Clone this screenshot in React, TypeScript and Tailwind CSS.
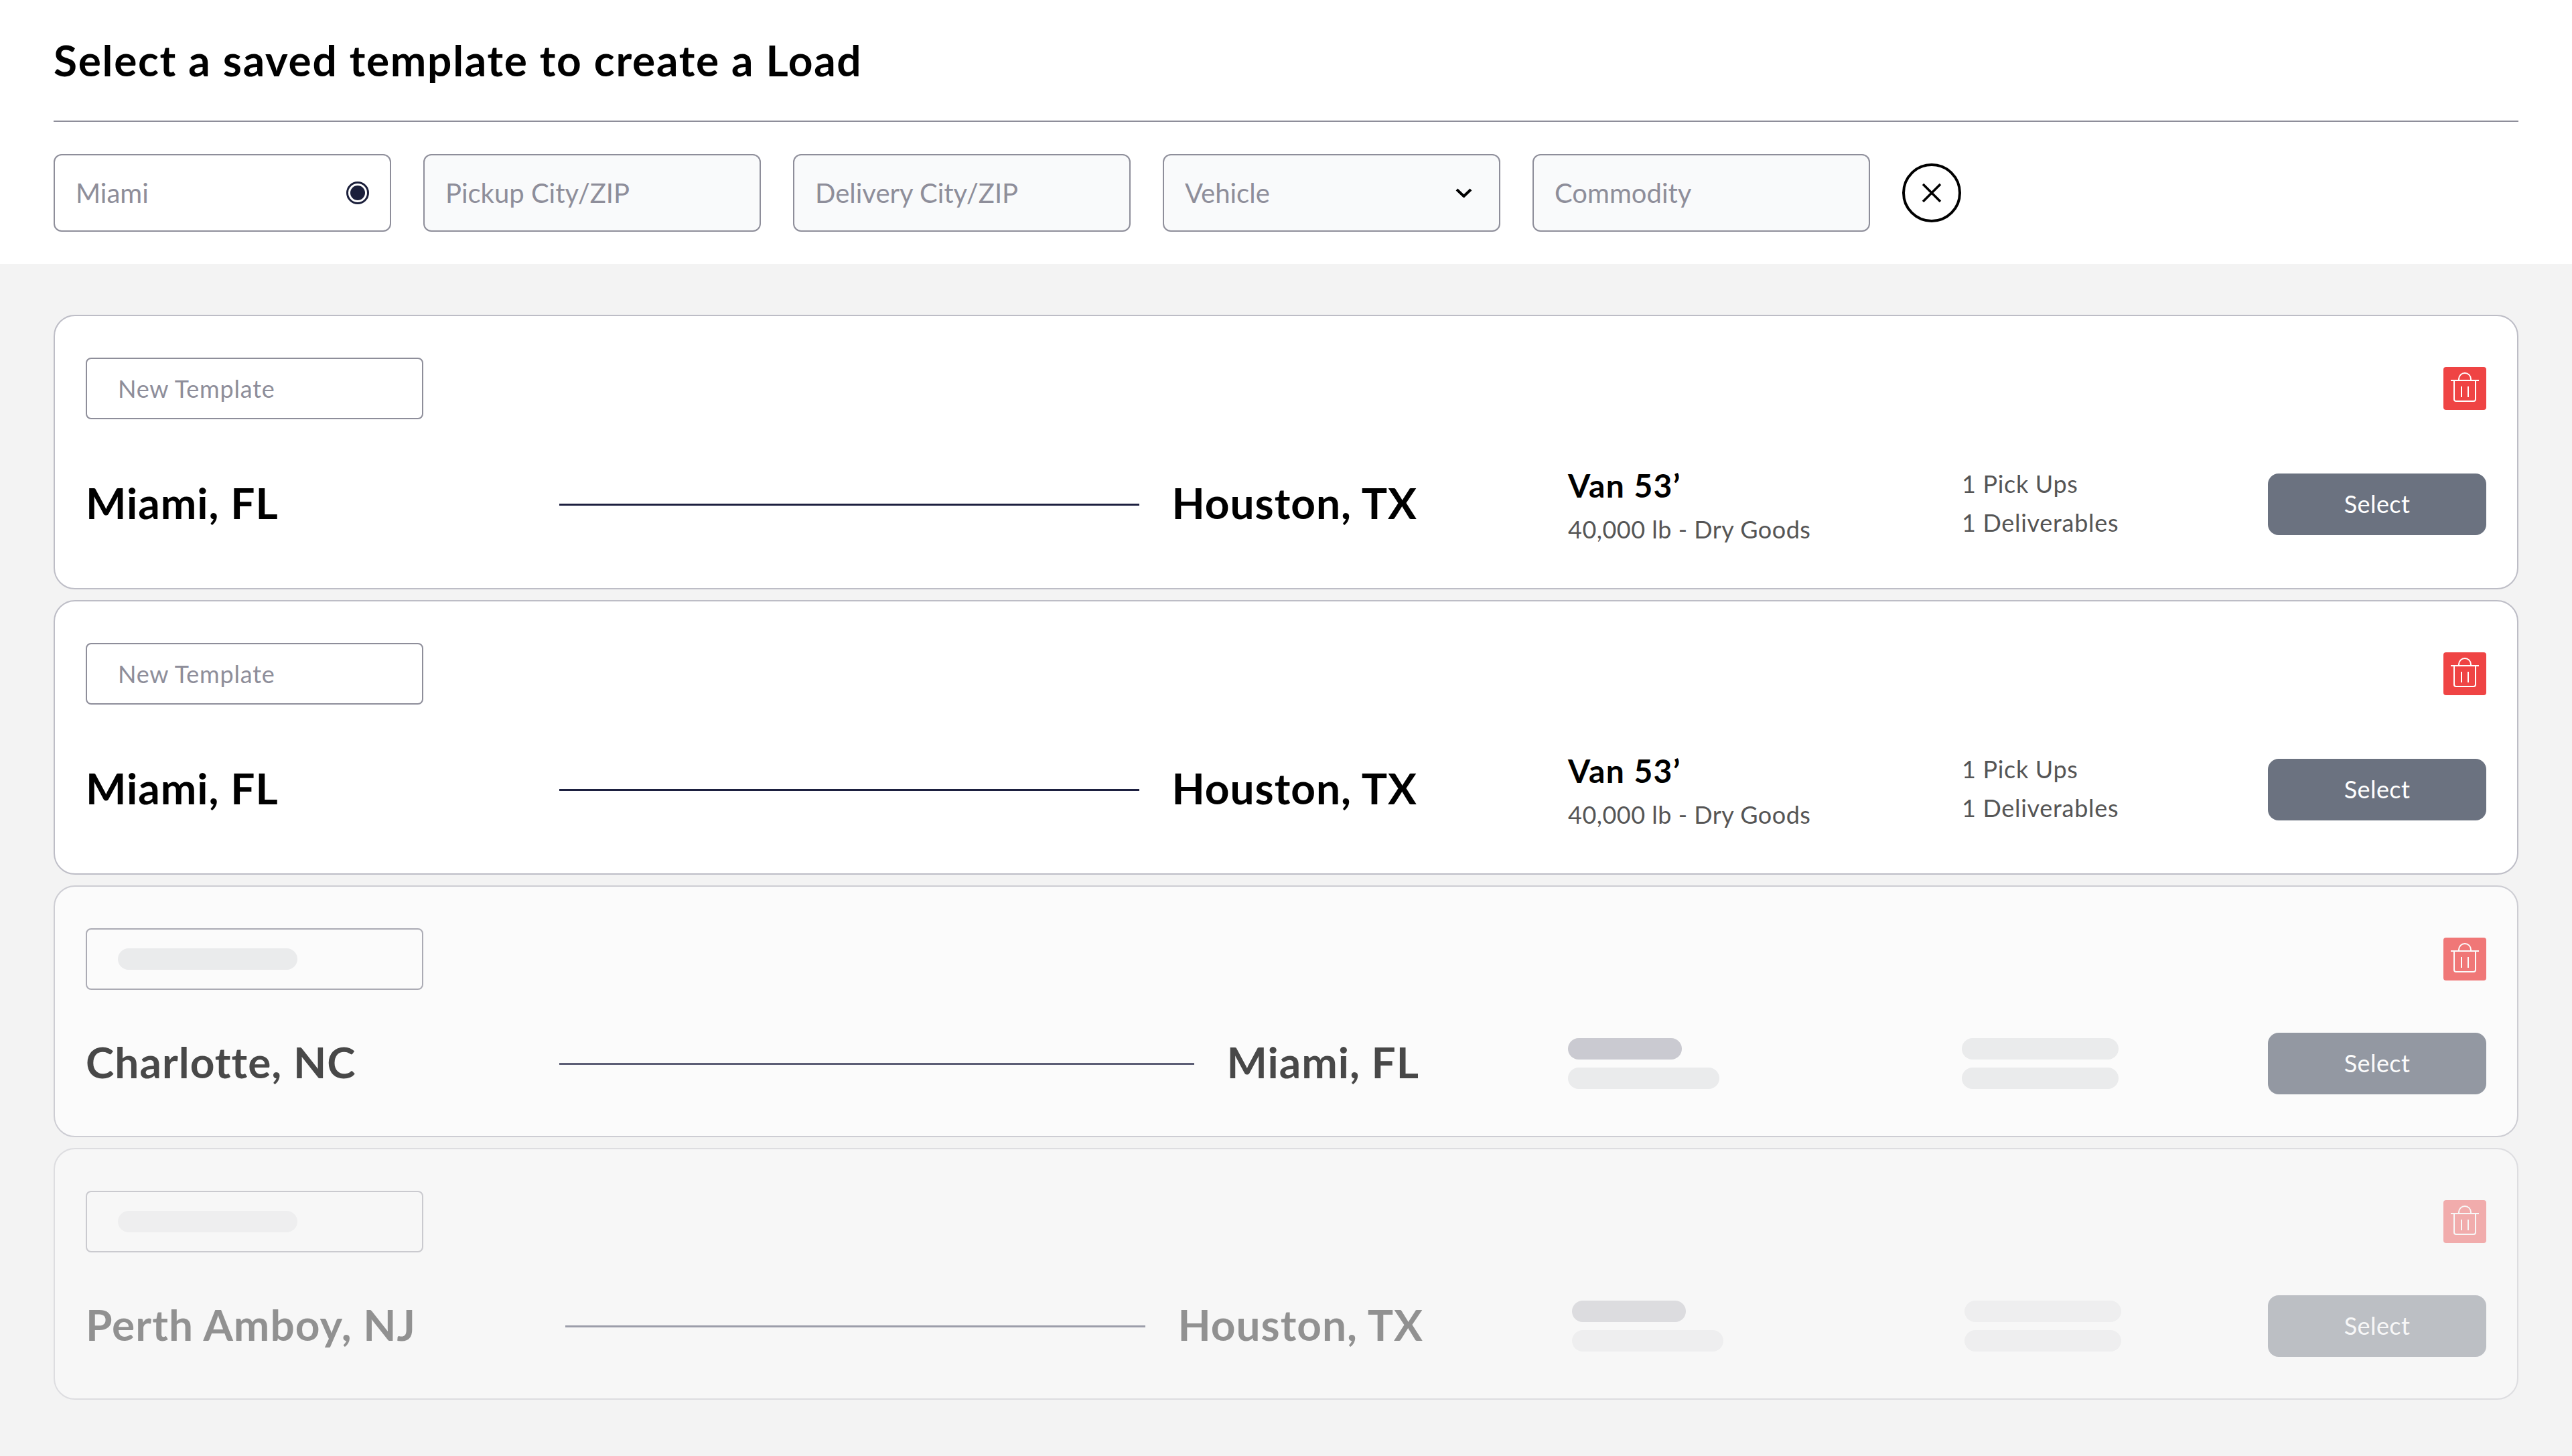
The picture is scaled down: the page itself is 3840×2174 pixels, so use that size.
import React from "react";

const font = "font-['Lato','Noto_Sans',sans-serif]";

type Template = {
  origin: string;
  destination: string;
  loaded: boolean;
  opacity: string;
  routeWidth: string;
  originWidth: string;
  detailsOffset: string;
  detailsWidth: string;
};

const templates: Template[] = [
  {
    origin: "Miami, FL",
    destination: "Houston, TX",
    loaded: true,
    opacity: "",
    routeWidth: "w-[1988px]",
    originWidth: "w-[707px]",
    detailsOffset: "ml-[225px]",
    detailsWidth: "w-[588px]",
  },
  {
    origin: "Miami, FL",
    destination: "Houston, TX",
    loaded: true,
    opacity: "",
    routeWidth: "w-[1988px]",
    originWidth: "w-[707px]",
    detailsOffset: "ml-[225px]",
    detailsWidth: "w-[588px]",
  },
  {
    origin: "Charlotte, NC",
    destination: "Miami, FL",
    loaded: false,
    opacity: "opacity-70",
    routeWidth: "w-[1991px]",
    originWidth: "w-[707px]",
    detailsOffset: "ml-[222px]",
    detailsWidth: "w-[588px]",
  },
  {
    origin: "Perth Amboy, NJ",
    destination: "Houston, TX",
    loaded: false,
    opacity: "opacity-40",
    routeWidth: "w-[1997px]",
    originWidth: "w-[716px]",
    detailsOffset: "ml-[222px]",
    detailsWidth: "w-[586px]",
  },
];

const TrashIcon = () => (
  <svg viewBox="0 0 64 64" className="w-16 h-16" fill="none" stroke="white" strokeWidth="2">
    <path d="M11 20H53" />
    <path d="M23 20V18A9 9 0 0 1 41 18V20" />
    <path d="M16 20V48Q16 51 19 51H45Q48 51 48 48V20" />
    <path d="M27 29V45M37 29V45" />
  </svg>
);

const FilterBox = ({ label, filled = true, children }: { label: string; filled?: boolean; children?: React.ReactNode }) => (
  <div
    className={`flex items-center justify-between w-[504px] h-[116px] px-[31px] border-2 border-[#8e8e9a] rounded-xl text-[40px] text-[#8e8e9a] ${
      filled ? "bg-[#f9fafb]" : "bg-white"
    }`}
  >
    <span>{label}</span>
    {children}
  </div>
);

const TemplateCard = ({ item }: { item: Template }) => (
  <div
    className={`flex flex-col gap-16 bg-white border-2 border-[#bdbdc6] rounded-[32px] px-[46px] py-[62px] ${item.opacity}`}
  >
    <div className="flex items-center justify-between">
      <div className="flex items-center w-[504px] h-[92px] pl-[46px] border-2 border-[#8e8e9a] rounded-lg text-[36px] tracking-[0.8px] text-[#8e8e9a]">
        {item.loaded ? "New Template" : <div className="w-[268px] h-8 rounded-full bg-[#e7e8ea]" />}
      </div>
      <button className="flex items-center justify-center w-16 h-16 rounded bg-[#ef4444]">
        <TrashIcon />
      </button>
    </div>
    <div className="flex items-center">
      <div className={`flex items-center shrink-0 ${item.routeWidth}`}>
        <div className={`shrink-0 pb-1 text-[64px] leading-[84px] tracking-[1px] font-bold text-black ${item.originWidth}`}>
          {item.origin}
        </div>
        <div className="flex-1 h-[3px] bg-[#1d2040]" />
        <div className="ml-12 pb-1 text-[64px] leading-[84px] tracking-[1px] font-bold text-black whitespace-nowrap">
          {item.destination}
        </div>
      </div>
      {item.loaded ? (
        <>
          <div className={`shrink-0 ${item.detailsOffset} ${item.detailsWidth}`}>
            <div className="text-[48px] leading-[70px] tracking-[1.4px] font-bold text-black">Van 53’</div>
            <div className="mt-1 text-[36px] leading-[52px] tracking-[0.5px] text-[#555555]">40,000 lb - Dry Goods</div>
          </div>
          <div className="text-[36px] leading-[58px] tracking-[0.7px] text-[#555555] pb-1">
            <div>1 Pick Ups</div>
            <div>1 Deliverables</div>
          </div>
        </>
      ) : (
        <>
          <div className={`flex flex-col gap-3 shrink-0 ${item.detailsOffset} ${item.detailsWidth}`}>
            <div className="w-[170px] h-8 rounded-full bg-[#babac3]" />
            <div className="w-[226px] h-8 rounded-full bg-[#e7e8ea]" />
          </div>
          <div className="flex flex-col gap-3">
            <div className="w-[234px] h-8 rounded-full bg-[#e7e8ea]" />
            <div className="w-[234px] h-8 rounded-full bg-[#e7e8ea]" />
          </div>
        </>
      )}
      <button className="ml-auto w-[326px] h-[92px] rounded-2xl bg-[#6b7280] text-white text-[36px] tracking-[0.4px] pb-0.5">
        Select
      </button>
    </div>
  </div>
);

export default function App() {
  return (
    <div className={`min-h-screen flex flex-col bg-[#f3f3f3] ${font}`}>
      <div className="bg-white px-20 pb-12">
        <div className="flex items-center h-[180px] text-[64px] tracking-[1.7px] font-bold text-black">
          Select a saved template to create a Load
        </div>
        <div className="h-0.5 bg-[#8e8e9a]" />
        <div className="flex items-center gap-12 mt-12">
          <FilterBox label="Miami" filled={false}>
            <svg viewBox="0 0 34 34" className="w-[34px] h-[34px]">
              <circle cx="17" cy="17" r="15.5" fill="none" stroke="#1b1f3b" strokeWidth="3" />
              <circle cx="17" cy="17" r="11" fill="#1b1f3b" />
            </svg>
          </FilterBox>
          <FilterBox label="Pickup City/ZIP" />
          <FilterBox label="Delivery City/ZIP" />
          <FilterBox label="Vehicle">
            <svg viewBox="0 0 25 14" className="w-[25px] h-[14px] mr-[9px]" fill="none" stroke="black" strokeWidth="4">
              <path d="M2 2L12.5 12L23 2" />
            </svg>
          </FilterBox>
          <FilterBox label="Commodity" />
          <button className="flex items-center justify-center w-[88px] h-[88px] rounded-full border-4 border-black">
            <svg viewBox="0 0 30 30" className="w-[30px] h-[30px]" fill="none" stroke="black" strokeWidth="3.5">
              <path d="M2 2L28 28M28 2L2 28" />
            </svg>
          </button>
        </div>
      </div>
      <div className="flex flex-col gap-4 px-20 pt-[76px] pb-[84px]">
        {templates.map((item, index) => (
          <TemplateCard key={index} item={item} />
        ))}
      </div>
    </div>
  );
}
